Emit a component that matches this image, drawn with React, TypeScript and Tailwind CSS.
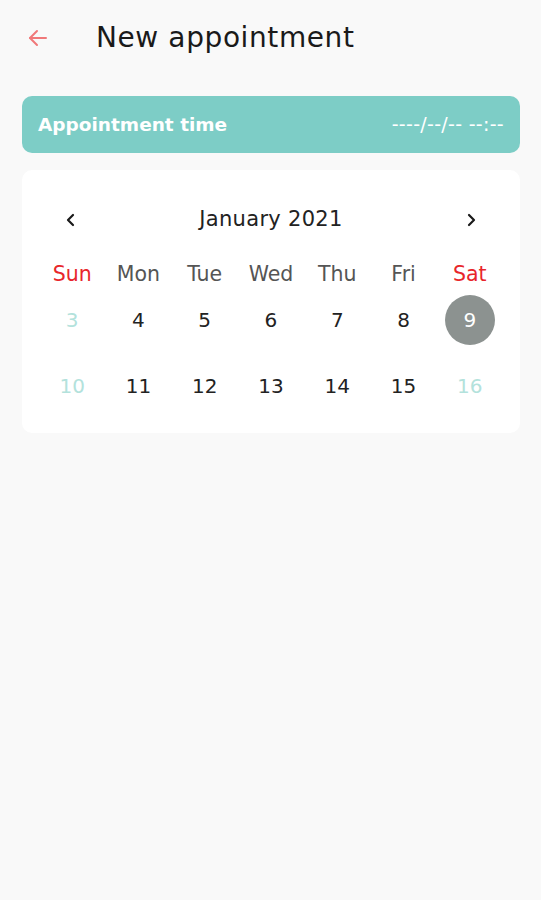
import React from 'react';

const days = ['Sun', 'Mon', 'Tue', 'Wed', 'Thu', 'Fri', 'Sat'];
const weeks = [
  [3, 4, 5, 6, 7, 8, 9],
  [10, 11, 12, 13, 14, 15, 16],
];

export default function App() {
  return (
    <div className="min-h-[900px] bg-[#f9f9f9] pl-[22px] pr-[21px] font-['DejaVu_Sans',sans-serif]">
      {/* top bar */}
      <div className="flex h-[76px] items-center">
        <button type="button" className="ml-[4px] flex w-[70px] items-center text-[#f0797a]">
          <svg width="24" height="24" viewBox="0 0 24 24" fill="none" stroke="currentColor" strokeWidth="2" strokeLinecap="round" strokeLinejoin="round">
            <path d="M20 12H4" />
            <path d="M11 5l-7 7 7 7" />
          </svg>
        </button>
        <h1 className="text-[28px] font-normal tracking-[0.6px] text-[#1a1a1a]">New appointment</h1>
      </div>

      {/* appointment time */}
      <div className="mt-[20px] flex h-[57px] items-center justify-between rounded-[10px] bg-[#7dcdc6] px-[16px] text-white">
        <span className="text-[18.5px] font-bold">Appointment time</span>
        <span className="text-[19px] tracking-[0.3px]">----/--/-- --:--</span>
      </div>

      {/* calendar */}
      <div className="mt-[17px] rounded-[10px] bg-white px-[17px] pb-[22px] pt-[30px]">
        <div className="flex h-[40px] items-center justify-between px-[24px]">
          <svg width="16" height="16" viewBox="0 0 16 16" fill="none" stroke="#1a1a1a" strokeWidth="2.2" strokeLinecap="round" strokeLinejoin="round">
            <path d="M10 3l-5 5 5 5" />
          </svg>
          <span className="text-[21px] tracking-[0.3px] text-[#222]">January 2021</span>
          <svg width="16" height="16" viewBox="0 0 16 16" fill="none" stroke="#1a1a1a" strokeWidth="2.2" strokeLinecap="round" strokeLinejoin="round">
            <path d="M6 3l5 5-5 5" />
          </svg>
        </div>

        <div className="mt-[18px] grid grid-cols-7">
          {days.map((d, i) => (
            <div
              key={d}
              className={
                'flex h-[32px] items-center justify-center text-[20.5px] ' +
                (i === 0 || i === 6 ? 'text-[#e8262b]' : 'text-[#555]')
              }
            >
              {d}
            </div>
          ))}
        </div>

        {weeks.map((w, wi) => (
          <div key={wi} className={'grid grid-cols-7 ' + (wi === 0 ? 'mt-[5px]' : 'mt-[16px]')}>
            {w.map((n) => {
              const selected = n === 9;
              const faded = n === 3 || n === 10 || n === 16;
              return (
                <div key={n} className="flex h-[50px] items-center justify-center">
                  <span
                    className={
                      'flex h-[50px] w-[50px] items-center justify-center rounded-full text-[20px] ' +
                      (selected
                        ? 'bg-[#8c9290] text-white'
                        : faded
                          ? 'text-[#b3e2dc]'
                          : 'text-[#222]')
                    }
                  >
                    {n}
                  </span>
                </div>
              );
            })}
          </div>
        ))}
      </div>
    </div>
  );
}
